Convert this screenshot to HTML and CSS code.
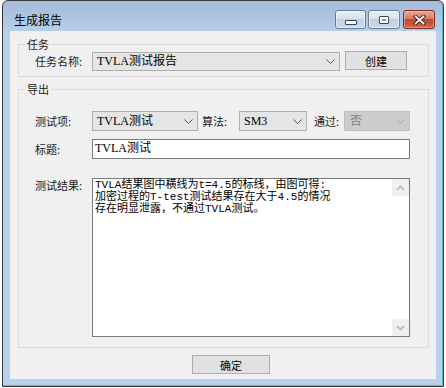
FILE: index.html
```html
<!DOCTYPE html>
<html lang="zh">
<head>
<meta charset="utf-8">
<title>生成报告</title>
<link rel="stylesheet" href="styles.css">
</head>
<body>
<div class="window">
  <div class="titlebar">
    <span class="title">生成报告</span>
    <div class="caption-btns">
      <div class="cbtn cmin"><span class="min-icon"></span></div>
      <div class="cbtn cmax"><span class="max-icon"></span></div>
      <div class="cbtn cclose">
        <svg width="13" height="10" viewBox="0 0 13 10"><path d="M2.5 1.5 L10.5 8.5 M10.5 1.5 L2.5 8.5" stroke="#4a1a12" stroke-width="3.6" stroke-linecap="square"/><path d="M2.5 1.5 L10.5 8.5 M10.5 1.5 L2.5 8.5" stroke="#ffffff" stroke-width="1.8" stroke-linecap="square"/></svg>
      </div>
    </div>
  </div>
  <div class="client">
    <div class="group g1">
      <div class="group-title"><span>任务</span></div>
      <div class="row r-task">
        <span class="label">任务名称:</span>
        <div class="combo w-task"><span class="val">TVLA测试报告</span><svg class="chev" width="9" height="5" viewBox="0 0 9 5"><path d="M0.5 0.5 L4.5 4.5 L8.5 0.5" fill="none" stroke="#555" stroke-width="1"/></svg></div>
        <div class="btn create">创建</div>
      </div>
    </div>
    <div class="group g2">
      <div class="group-title"><span>导出</span></div>
      <div class="row r-item">
        <span class="label">测试项:</span>
        <div class="combo w-item"><span class="val">TVLA测试</span><svg class="chev" width="9" height="5" viewBox="0 0 9 5"><path d="M0.5 0.5 L4.5 4.5 L8.5 0.5" fill="none" stroke="#555" stroke-width="1"/></svg></div>
        <span class="label lbl-alg">算法:</span>
        <div class="combo w-alg"><span class="val">SM3</span><svg class="chev" width="9" height="5" viewBox="0 0 9 5"><path d="M0.5 0.5 L4.5 4.5 L8.5 0.5" fill="none" stroke="#555" stroke-width="1"/></svg></div>
        <span class="label lbl-pass">通过:</span>
        <div class="combo w-pass disabled"><span class="val">否</span><svg class="chev" width="9" height="5" viewBox="0 0 9 5"><path d="M0.5 0.5 L4.5 4.5 L8.5 0.5" fill="none" stroke="#a6a6a6" stroke-width="1"/></svg></div>
      </div>
      <div class="row r-title">
        <span class="label">标题:</span>
        <div class="textbox">TVLA测试</div>
      </div>
      <div class="row r-result">
        <span class="label top">测试结果:</span>
        <div class="memo">
          <div class="memo-text">TVLA结果图中横线为t=4.5的标线，由图可得:<br>加密过程的T-test测试结果存在大于4.5的情况<br>存在明显泄露，不通过TVLA测试。</div>
          <div class="vscroll">
            <div class="sarrow"><svg width="9" height="6" viewBox="0 0 9 6"><path d="M1 5 L4.5 1.5 L8 5" fill="none" stroke="#c2c2c2" stroke-width="2"/></svg></div>
            <div class="strack"></div>
            <div class="sarrow"><svg width="9" height="6" viewBox="0 0 9 6"><path d="M1 1 L4.5 4.5 L8 1" fill="none" stroke="#c2c2c2" stroke-width="2"/></svg></div>
          </div>
        </div>
      </div>
    </div>
    <div class="footer">
      <div class="btn ok">确定</div>
    </div>
  </div>
</div>
</body>
</html>
```

FILE: styles.css
```css
html, body {
  margin: 0;
  padding: 0;
  background: #ffffff;
}

body {
  font-family: "Noto Sans CJK SC", sans-serif;
  font-size: 11px;
  color: #1a1a1a;
}

.window {
  margin-left: 2px;
  width: 442px;
  height: 387px;
  box-sizing: border-box;
  border: 1px solid #3a3a3a;
  border-radius: 6px 6px 0 0;
  background: linear-gradient(#a4bcda 0px, #b9d1ea 36px, #b9d1ea 100%);
  padding: 0 7px 7px 7px;
  box-shadow: inset -1px -1px 0 #56b9d0;
}

.titlebar {
  height: 30px;
  display: flex;
  justify-content: space-between;
  align-items: flex-start;
  padding: 0 1px 0 4px;
}

.title {
  margin-top: 11px;
  font-size: 12px;
  line-height: 16px;
  color: #000;
}

.caption-btns {
  display: flex;
  margin-top: 9px;
}

.cbtn {
  height: 19px;
  box-sizing: border-box;
  border: 1px solid #6b7c92;
  border-radius: 3px;
  background: linear-gradient(#e9eff7 0%, #d6e1ee 45%, #bfd0e4 50%, #cbdaeb 100%);
  display: flex;
  align-items: center;
  justify-content: center;
  box-shadow: inset 0 0 0 1px rgba(255, 255, 255, 0.55);
}

.cmin { width: 31px; }
.cmax { width: 32px; margin-left: 2px; }
.cclose {
  width: 32px;
  margin-left: 3px;
  border-color: #7a2b1d;
  background: linear-gradient(#e8a797 0%, #d77b66 45%, #c2452d 50%, #d2674f 100%);
  box-shadow: inset 0 0 0 1px rgba(255, 210, 200, 0.45);
}

.min-icon {
  width: 10px;
  height: 3px;
  margin-top: 5px;
  border: 1px solid #34475f;
  background: #ffffff;
  border-radius: 1px;
}

.max-icon {
  width: 8px;
  height: 6px;
  border: 1px solid #34475f;
  background: #8093ab;
  box-shadow: inset 0 0 0 2px #ffffff;
  border-radius: 1px;
}

.client {
  height: 348px;
  background: #f0f0f0;
  box-sizing: border-box;
  padding-top: 13px;
}

.group {
  margin-left: 8px;
  width: 411px;
  box-sizing: border-box;
  border: 1px solid #dcdcdc;
}

.group-title {
  height: 14px;
  margin-top: -8px;
  line-height: 14px;
}

.group-title span {
  display: inline-block;
  margin-left: 6px;
  padding: 0 2px;
  background: #f0f0f0;
  color: #1a1a1a;
}

.g1 {
  padding-bottom: 5px;
}

.g2 {
  margin-top: 12px;
  padding-bottom: 10px;
}

.row {
  display: flex;
  align-items: flex-start;
  padding-left: 16px;
}

.label {
  width: 57px;
  flex: none;
  line-height: 20px;
  white-space: nowrap;
}

.label.top {
  line-height: 14px;
}

.r-task {
  height: 20px;
}

.combo {
  height: 19px;
  box-sizing: border-box;
  border: 1px solid #adadad;
  background: #e5e5e5;
  display: flex;
  align-items: center;
  justify-content: space-between;
  padding: 0 4px 0 4px;
  font-family: "Liberation Serif", "Noto Sans CJK SC", serif;
  font-size: 12px;
  color: #000;
  flex: none;
}

.combo .val {
  line-height: 17px;
  white-space: nowrap;
}

.combo.disabled {
  background: #cccccc;
  border-color: #bfbfbf;
  color: #838383;
  padding-left: 5px;
}

.r-task .combo {
  margin-top: 1px;
}

.w-task { width: 248px; }

.btn {
  height: 19px;
  box-sizing: border-box;
  border: 1px solid #adadad;
  background: #e1e1e1;
  display: flex;
  align-items: center;
  justify-content: center;
  color: #000;
  font-size: 11px;
  flex: none;
}

.create {
  width: 62px;
  margin-left: 5px;
}

.r-item {
  margin-top: 15px;
  height: 20px;
}

.r-item .combo {
  height: 20px;
}

.w-item { width: 106px; }
.w-alg { width: 68px; }
.w-pass { width: 66px; }

.lbl-alg {
  width: 37px;
  margin-left: 4px;
}

.lbl-pass {
  width: 30px;
  margin-left: 7px;
}

.r-title {
  margin-top: 8px;
  height: 20px;
}

.textbox {
  width: 318px;
  height: 20px;
  box-sizing: border-box;
  border: 1px solid #7a7a7a;
  background: #ffffff;
  padding: 0 2px;
  line-height: 17px;
  font-family: "Liberation Serif", "Noto Sans CJK SC", serif;
  font-size: 12px;
  color: #000;
}

.r-result {
  margin-top: 19px;
}

.memo {
  width: 318px;
  height: 159px;
  box-sizing: border-box;
  border: 1px solid #7a7a7a;
  background: #ffffff;
  display: flex;
}

.memo-text {
  flex: 1;
  padding: 0 0 0 2px;
  font-family: "Liberation Mono", "Noto Sans CJK SC", monospace;
  font-size: 11px;
  line-height: 12px;
  color: #000;
  white-space: nowrap;
}

.vscroll {
  width: 17px;
  display: flex;
  flex-direction: column;
}

.sarrow {
  height: 17px;
  background: #f0f0f0;
  display: flex;
  align-items: center;
  justify-content: center;
}

.strack {
  flex: 1;
  background: #ffffff;
}

.footer {
  display: flex;
  padding-left: 182px;
  margin-top: 7px;
}

.ok {
  width: 78px;
}
```
